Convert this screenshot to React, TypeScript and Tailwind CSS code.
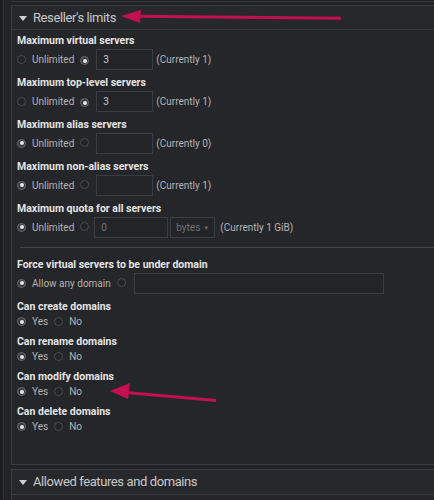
import React from 'react';

const Radio: React.FC<{ checked?: boolean }> = ({ checked }) => (
  <span
    className={`inline-flex w-[9px] h-[9px] shrink-0 rounded-full border items-center justify-center ${
      checked ? 'border-[#6a6b70] bg-[#3a3b40]' : 'border-[#4a4b50] bg-[#222327]'
    }`}
  >
    {checked && <span className="w-[4px] h-[4px] rounded-full bg-[#e8e8e8]" />}
  </span>
);

const Opt: React.FC<{ checked?: boolean; label?: string }> = ({ checked, label }) => (
  <span className="flex items-center gap-[6px]">
    <Radio checked={checked} />
    {label && <span className="text-[#b4b4b4]">{label}</span>}
  </span>
);

const Label: React.FC<{ children: React.ReactNode }> = ({ children }) => (
  <div className="h-[14px] leading-[14px] text-[10.5px] font-bold text-[#e4e4e4]">{children}</div>
);

const Box: React.FC<{ w: string; value?: string; dim?: boolean }> = ({ w, value, dim }) => (
  <div
    className={`${w} h-[21px] border border-[#3c3d42] bg-[#232428] flex items-center px-[6px] ${
      dim ? 'text-[#6f7075]' : 'text-[#c8c8c8]'
    }`}
  >
    {value}
  </div>
);

const LimitRow: React.FC<{ label: string; unlimited: boolean; value?: string; current: string }> = ({
  label,
  unlimited,
  value,
  current,
}) => (
  <div className="mb-[6px]">
    <Label>{label}</Label>
    <div className="h-[22px] flex items-center text-[10px]">
      <Opt checked={unlimited} label="Unlimited" />
      <span className="ml-[6px]">
        <Radio checked={!unlimited} />
      </span>
      <span className="ml-[7px]">
        <Box w="w-[57px]" value={value} />
      </span>
      <span className="ml-[3px] text-[#b4b4b4]">{current}</span>
    </div>
  </div>
);

const YesNo: React.FC<{ label: string }> = ({ label }) => (
  <div className="mb-[6px]">
    <Label>{label}</Label>
    <div className="h-[15px] flex items-center gap-[6px] text-[10px]">
      <Opt checked label="Yes" />
      <Opt label="No" />
    </div>
  </div>
);

export default function App() {
  return (
    <div
      className="relative w-full h-screen overflow-hidden bg-[#1c1d20] flex"
      style={{ fontFamily: 'Roboto, "Liberation Sans", sans-serif' }}
    >
      <div className="w-[4px] shrink-0 bg-[#1c1d20] border-r border-[#303135]" />
      <div className="flex-1 bg-[#222327] pl-[7px]">
        <div className="h-[2px] border-b border-[#36373b]" />
        <div className="mt-[3px] border-l border-t border-b border-[#3a3b40] bg-[#25262a]">
          {/* header */}
          <div className="h-[24px] flex items-center pl-[7px] border-b border-[#38393d] bg-[#27282c]">
            <svg width="8" height="5" viewBox="0 0 8 5" className="mr-[6px] mt-[1px]">
              <path d="M0 0 H8 L4 5 Z" fill="#cfcfcf" />
            </svg>
            <span className="text-[13px] tracking-[-0.4px] text-[#c9c9c9]">Reseller's limits</span>
          </div>

          {/* body */}
          <div className="pl-[5px] pt-[4px] pb-[24px]">
            <LimitRow label="Maximum virtual servers" unlimited={false} value="3" current="(Currently 1)" />
            <LimitRow label="Maximum top-level servers" unlimited={false} value="3" current="(Currently 1)" />
            <LimitRow label="Maximum alias servers" unlimited current="(Currently 0)" />
            <LimitRow label="Maximum non-alias servers" unlimited current="(Currently 1)" />

            <div>
              <Label>Maximum quota for all servers</Label>
              <div className="h-[22px] flex items-center text-[10px]">
                <Opt checked label="Unlimited" />
                <span className="ml-[6px]">
                  <Radio />
                </span>
                <span className="ml-[5px]">
                  <Box w="w-[74px]" value="0" dim />
                </span>
                <span className="ml-[2px] w-[45px] h-[21px] border border-[#3c3d42] bg-[#232428] flex items-center justify-between px-[5px] text-[#6f7075]">
                  bytes
                  <span className="text-[6px]">▼</span>
                </span>
                <span className="ml-[5px] text-[#b4b4b4]">(Currently 1 GiB)</span>
              </div>
            </div>

            <div className="mt-[9px] ml-[3px] h-px bg-[#45464b]" />

            <div className="mt-[10px] mb-[6px]">
              <Label>Force virtual servers to be under domain</Label>
              <div className="h-[22px] flex items-center text-[10px]">
                <Opt checked label="Allow any domain" />
                <span className="ml-[6px]">
                  <Radio />
                </span>
                <span className="ml-[8px]">
                  <Box w="w-[250px]" />
                </span>
              </div>
            </div>

            <YesNo label="Can create domains" />
            <YesNo label="Can rename domains" />
            <YesNo label="Can modify domains" />
            <YesNo label="Can delete domains" />
          </div>
        </div>

        <div className="mt-[4px] border-l border-t border-[#3a3b40] bg-[#25262a]">
          <div className="h-[25px] flex items-center pl-[7px] border-b border-[#38393d] bg-[#27282c]">
            <svg width="8" height="5" viewBox="0 0 8 5" className="mr-[6px] mt-[1px]">
              <path d="M0 0 H8 L4 5 Z" fill="#cfcfcf" />
            </svg>
            <span className="text-[13px] tracking-[-0.4px] text-[#c9c9c9]">Allowed features and domains</span>
          </div>
          <div className="h-[20px]" />
        </div>
      </div>

      {/* annotation arrows */}
      <svg className="absolute left-0 top-0 pointer-events-none" width="434" height="500">
        <line x1="138" y1="16.2" x2="341" y2="18.3" stroke="#c4104e" strokeWidth="3" />
        <polygon points="121,16 141,10 140,23" fill="#c4104e" />
        <line x1="126" y1="392.5" x2="216" y2="400.5" stroke="#c4104e" strokeWidth="3" />
        <polygon points="110,391 130,383 128,399" fill="#c4104e" />
      </svg>
    </div>
  );
}
